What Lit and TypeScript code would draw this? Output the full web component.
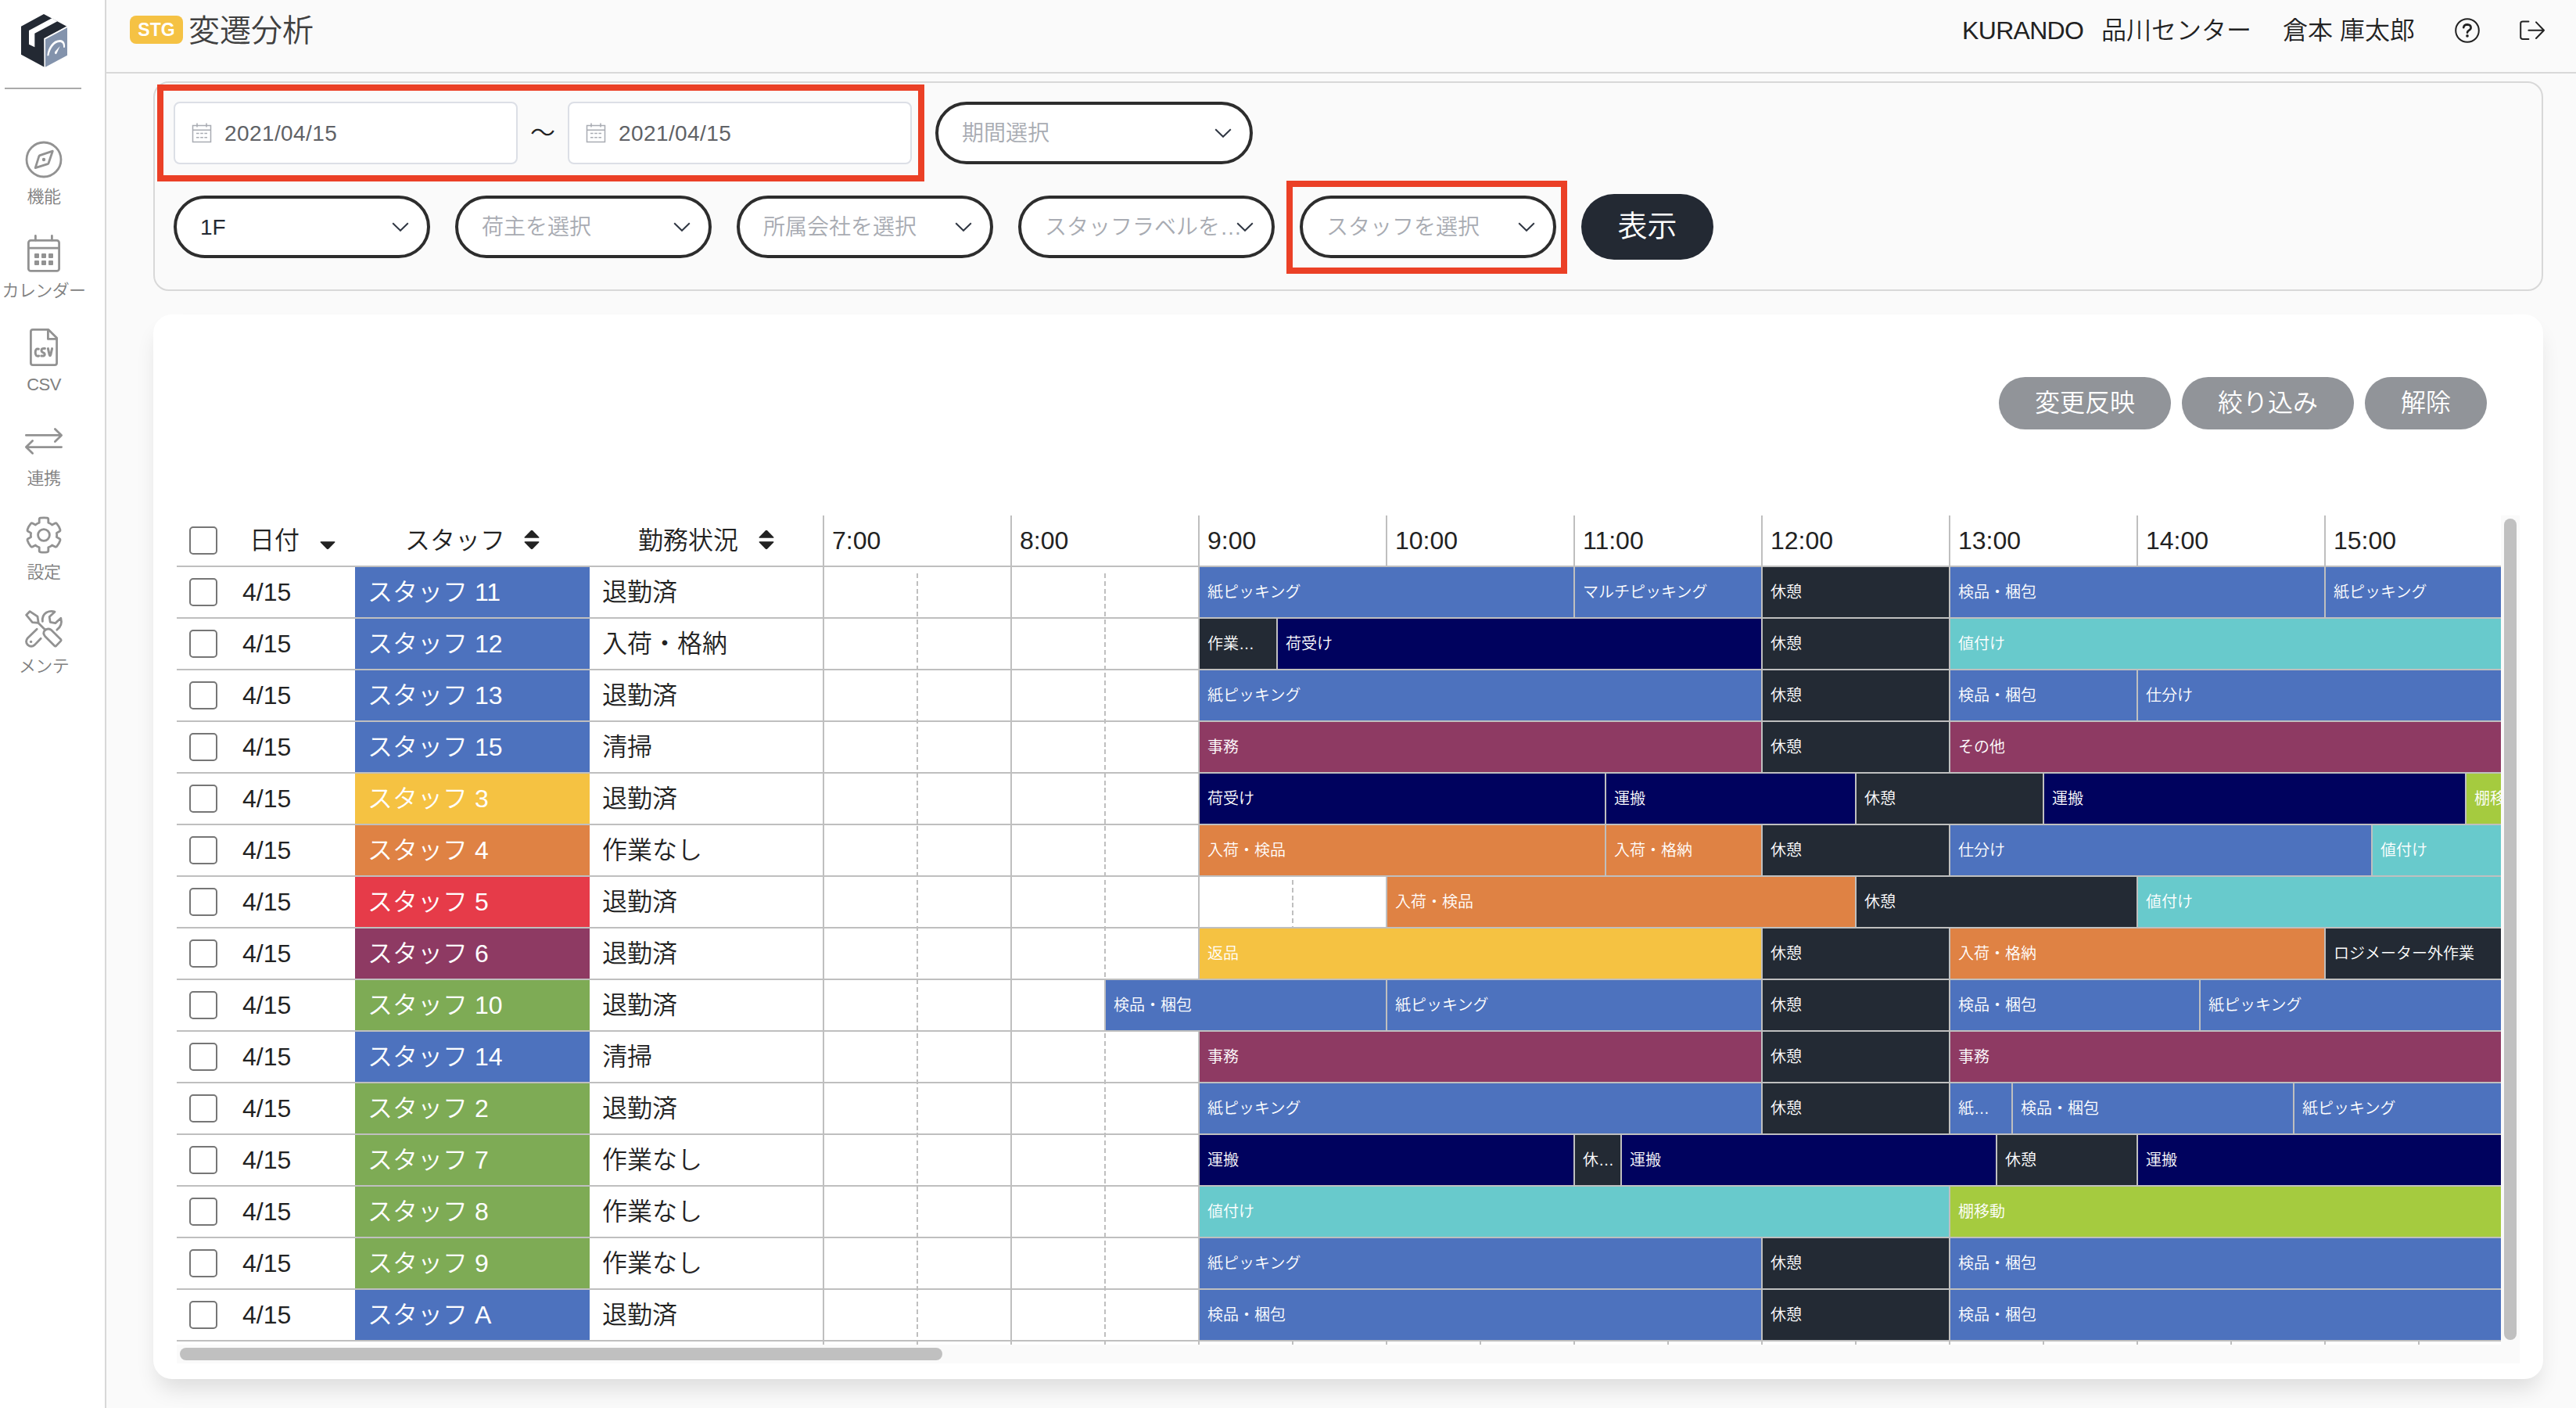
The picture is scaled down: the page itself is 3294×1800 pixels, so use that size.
import { LitElement, html, css, svg } from "lit";
import { customElement } from "lit/decorators.js";
import { classMap } from "lit/directives/class-map.js";
import { styleMap } from "lit/directives/style-map.js";

type Tone = "blue" | "navy" | "dark" | "teal" | "purple" | "orange" | "yellow" | "red" | "green" | "lime";
type Task = [label: string, start: string, end: string, tone: Tone];
interface Row {
  staff: string;
  tone: Tone;
  status: string;
  tasks: Task[];
}

const HOURS = ["7:00", "8:00", "9:00", "10:00", "11:00", "12:00", "13:00", "14:00", "15:00"];
const PX_PER_MINUTE = 4;
const END = "15:57";
const rest = (start = "12:00", end = "13:00"): Task => ["休憩", start, end, "dark"];

const ROWS: Row[] = [
  { staff: "スタッフ 11", tone: "blue", status: "退勤済", tasks: [["紙ピッキング", "9:00", "11:00", "blue"], ["マルチピッキング", "11:00", "12:00", "blue"], rest(), ["検品・梱包", "13:00", "15:00", "blue"], ["紙ピッキング", "15:00", END, "blue"]] },
  { staff: "スタッフ 12", tone: "blue", status: "入荷・格納", tasks: [["作業…", "9:00", "9:25", "dark"], ["荷受け", "9:25", "12:00", "navy"], rest(), ["値付け", "13:00", END, "teal"]] },
  { staff: "スタッフ 13", tone: "blue", status: "退勤済", tasks: [["紙ピッキング", "9:00", "12:00", "blue"], rest(), ["検品・梱包", "13:00", "14:00", "blue"], ["仕分け", "14:00", END, "blue"]] },
  { staff: "スタッフ 15", tone: "blue", status: "清掃", tasks: [["事務", "9:00", "12:00", "purple"], rest(), ["その他", "13:00", END, "purple"]] },
  { staff: "スタッフ 3", tone: "yellow", status: "退勤済", tasks: [["荷受け", "9:00", "11:10", "navy"], ["運搬", "11:10", "12:30", "navy"], rest("12:30", "13:30"), ["運搬", "13:30", "15:45", "navy"], ["棚移動", "15:45", END, "lime"]] },
  { staff: "スタッフ 4", tone: "orange", status: "作業なし", tasks: [["入荷・検品", "9:00", "11:10", "orange"], ["入荷・格納", "11:10", "12:00", "orange"], rest(), ["仕分け", "13:00", "15:15", "blue"], ["値付け", "15:15", END, "teal"]] },
  { staff: "スタッフ 5", tone: "red", status: "退勤済", tasks: [["入荷・検品", "10:00", "12:30", "orange"], rest("12:30", "14:00"), ["値付け", "14:00", END, "teal"]] },
  { staff: "スタッフ 6", tone: "purple", status: "退勤済", tasks: [["返品", "9:00", "12:00", "yellow"], rest(), ["入荷・格納", "13:00", "15:00", "orange"], ["ロジメーター外作業", "15:00", END, "dark"]] },
  { staff: "スタッフ 10", tone: "green", status: "退勤済", tasks: [["検品・梱包", "8:30", "10:00", "blue"], ["紙ピッキング", "10:00", "12:00", "blue"], rest(), ["検品・梱包", "13:00", "14:20", "blue"], ["紙ピッキング", "14:20", END, "blue"]] },
  { staff: "スタッフ 14", tone: "blue", status: "清掃", tasks: [["事務", "9:00", "12:00", "purple"], rest(), ["事務", "13:00", END, "purple"]] },
  { staff: "スタッフ 2", tone: "green", status: "退勤済", tasks: [["紙ピッキング", "9:00", "12:00", "blue"], rest(), ["紙…", "13:00", "13:20", "blue"], ["検品・梱包", "13:20", "14:50", "blue"], ["紙ピッキング", "14:50", END, "blue"]] },
  { staff: "スタッフ 7", tone: "green", status: "作業なし", tasks: [["運搬", "9:00", "11:00", "navy"], ["休…", "11:00", "11:15", "dark"], ["運搬", "11:15", "13:15", "navy"], rest("13:15", "14:00"), ["運搬", "14:00", END, "navy"]] },
  { staff: "スタッフ 8", tone: "green", status: "作業なし", tasks: [["値付け", "9:00", "13:00", "teal"], ["棚移動", "13:00", END, "lime"]] },
  { staff: "スタッフ 9", tone: "green", status: "作業なし", tasks: [["紙ピッキング", "9:00", "12:00", "blue"], rest(), ["検品・梱包", "13:00", END, "blue"]] },
  { staff: "スタッフ A", tone: "blue", status: "退勤済", tasks: [["検品・梱包", "9:00", "12:00", "blue"], rest(), ["検品・梱包", "13:00", END, "blue"]] },
];

/** Distance in pixels of a clock time from the left edge of the timeline. */
const offset = (time: string): number => {
  const [h, m] = time.split(":").map(Number);
  return ((h - 7) * 60 + m) * PX_PER_MINUTE;
};

const ICONS = {
  compass: svg`<circle cx="24" cy="24" r="22"/><path d="M35.3 13.2 L19 18.6 Q18.2 18.9 17.9 19.7 L13.2 34.6 L29 29.6 Q29.8 29.3 30.1 28.5 Z"/><circle cx="24" cy="24" r="2.2" fill="#929292" stroke="none"/>`,
  calendar: svg`<rect x="4.4" y="7.4" width="39.2" height="39" rx="3"/><path d="M4.4 17.2H43.6M13.4 1.4V7M34.4 1.4V7"/><g fill="#929292" stroke="none"><rect x="12" y="24" width="6" height="6" rx="1"/><rect x="21" y="24" width="6" height="6" rx="1"/><rect x="30" y="24" width="6" height="6" rx="1"/><rect x="12" y="33" width="6" height="6" rx="1"/><rect x="21" y="33" width="6" height="6" rx="1"/><rect x="30" y="33" width="6" height="6" rx="1"/></g>`,
  csv: svg`<path d="M30 1.4H10Q7.4 1.4 7.4 4V44Q7.4 46.6 10 46.6H38Q40.6 46.6 40.6 44V12Z"/><path d="M29.4 2V13.4H40.4"/><path stroke-width="3" d="M17.4 26.2Q13.2 25 13.2 30.6Q13.2 36.2 17.6 35M25.4 25.6Q21 25 21 28Q21 29.8 23 30.6Q25.2 31.4 25.2 33.2Q25.2 35.6 20.8 35M29.4 25.6L31.2 33.6Q32 36 32.8 33.6L34.6 25.6"/>`,
  exchange: svg`<path d="M1.4 16.4H46.4M38.4 8.4L46.6 16.4L38.4 24.4M46.6 31.6H1.6M9.6 23.6L1.4 31.6L9.6 39.6"/>`,
  gear: svg`<circle cx="24" cy="24" r="7.4"/><path d="M18.2 4Q18.2 2.4 19.8 2.2Q24 1.6 28.2 2.2Q29.8 2.4 29.8 4V8.2Q32.6 9.2 34.6 11L38.4 9Q39.6 8.4 40.6 9.4Q43.8 13.2 45 17.4Q45.2 18.6 44.2 19.2L40.4 21.4Q41 24 40.4 26.6L44.2 28.8Q45.2 29.4 45 30.6Q43.8 34.8 40.6 38.6Q39.6 39.6 38.4 39L34.6 37Q32.6 38.8 29.8 39.8V44Q29.8 45.6 28.2 45.8Q24 46.4 19.8 45.8Q18.2 45.6 18.2 44V39.8Q15.4 38.8 13.4 37L9.6 39Q8.4 39.6 7.4 38.6Q4.2 34.8 3 30.6Q2.8 29.4 3.8 28.8L7.6 26.6Q7 24 7.6 21.4L3.8 19.2Q2.8 18.6 3 17.4Q4.2 13.2 7.4 9.4Q8.4 8.4 9.6 9L13.4 11Q15.4 9.2 18.2 8.2Z"/>`,
  tools: svg`<path d="M1.6 6.2L6.2 1.6L16 8.2L17.2 16.4L9.4 15.6ZM16.6 16L25.6 25M25 26.2Q28.6 22.4 33.4 25.2L45.8 37.4Q46.6 38.4 45.8 39.4L39.8 45.6Q38.6 46.6 37.6 45.6L25.6 33.4Q22.4 29.4 25 26.2ZM15.2 24.2L3.6 35.4Q-.4 40.2 3.4 44.4Q8 48.2 12.4 44.4L20.2 36.2M22.4 14.4Q21.4 6.8 27.4 3Q32.6 .4 38 2.2L31.2 8.6L32.2 15.4L38.8 16.6L45.8 10.2Q48.4 19.6 40.8 25.2"/><circle cx="7.6" cy="40.4" r="1.7" fill="#929292" stroke="none"/>`,
};

const NAV: [keyof typeof ICONS, string][] = [
  ["compass", "機能"],
  ["calendar", "カレンダー"],
  ["csv", "CSV"],
  ["exchange", "連携"],
  ["gear", "設定"],
  ["tools", "メンテ"],
];

const logo = html`
  <svg class="logo" viewBox="81 54 177 204">
    <path fill="#232933" d="M168 54L256 101L170 148V257L81 209V101Z" />
    <path fill="#fff" d="M199 70L220 82L133 128V181L111 170V117Z" />
    <path fill="#fff" d="M169 147L258 100V107L174 152V258H170Z" />
    <path fill="#8393ac" d="M174 151L258 106V212L174 257Z" />
    <path fill="#fff" d="M181 214C184 180 204 153 230 153C245 153 251 166 249 182L243 182C244 169 239 162 229 162C210 162 192 184 187 214Z" />
    <path fill="#fff" d="M230 177L219 202Q216 210 212 207Q208 204 211 198Z" />
  </svg>
`;

const chevron = html`<svg class="chevron" viewBox="0 0 22 12"><path d="M1.2 1.2L11 10.8L20.8 1.2" /></svg>`;

const dateIcon = html`
  <svg class="date-icon" viewBox="0 0 26 26">
    <path d="M1.5 3.5H24.5V24.5H1.5ZM1.5 9.2H24.5M7 .6V5.5M19 .6V5.5" />
    <path stroke-dasharray="3.6 1.6" d="M6 13.5H20M6 18.8H20" />
  </svg>
`;

const sortBoth = html`
  <svg class="sort" viewBox="0 0 20 26">
    <path d="M1.2 10.8Q0 10.6 .8 9.4L8.6 1.4Q10 .2 11.4 1.4L19.2 9.4Q20 10.6 18.8 10.8Z" />
    <path d="M1.2 15.2Q0 15.4 .8 16.6L8.6 24.6Q10 25.8 11.4 24.6L19.2 16.6Q20 15.4 18.8 15.2Z" />
  </svg>
`;
const sortDown = html`
  <svg class="sort" viewBox="0 0 20 26">
    <path d="M1.2 15.2Q0 15.4 .8 16.6L8.6 24.6Q10 25.8 11.4 24.6L19.2 16.6Q20 15.4 18.8 15.2Z" />
  </svg>
`;

@customElement("app-root")
export class AppRoot extends LitElement {
  static styles = css`
    :host {
      display: flex;
      width: 3294px;
      height: 1800px;
      overflow: hidden;
      background: #fafafa;
      color: #222;
      font-family: "Liberation Sans", "Noto Sans CJK JP", sans-serif;
      font-weight: 350;
      font-size: 32px;
      line-height: 1.25;
    }
    * { box-sizing: border-box; }
    svg { display: block; fill: none; flex: none; }

    .sidebar {
      flex: none;
      width: 136px;
      padding: 18px 22px 0 0;
      border-right: 2px solid #d8d8d8;
      background: #fff;
      display: flex;
      flex-direction: column;
      align-items: center;
    }
    .logo { width: 59px; height: 68px; }
    .divider { width: 98px; height: 2px; margin: 26px 2px 66px 0; background: #aaa; }
    .nav-item {
      height: 120px;
      display: flex;
      flex-direction: column;
      align-items: center;
      gap: 10px;
      color: #808080;
      font-size: 22px;
      line-height: 28px;
      white-space: nowrap;
      letter-spacing: -0.6px;
    }
    .nav-icon {
      width: 48px;
      height: 48px;
      overflow: visible;
      stroke: #929292;
      stroke-width: 2.8;
      stroke-linecap: round;
      stroke-linejoin: round;
    }

    .main { flex: 1; min-width: 0; display: flex; flex-direction: column; }
    .header {
      flex: none;
      height: 94px;
      padding: 0 40px 14px 30px;
      border-bottom: 2px solid #d8d8d8;
      display: flex;
      align-items: center;
      white-space: pre;
    }
    .badge {
      width: 68px;
      height: 36px;
      margin: -2px 7px 0 0;
      border-radius: 8px;
      background: #f5c244;
      color: #fff;
      font-weight: 700;
      font-size: 23px;
      line-height: 37px;
      text-align: center;
    }
    .title { flex: 1; font-size: 40px; color: #404040; }
    .company { width: 160px; margin-right: 18px; letter-spacing: -0.7px; }
    .center { margin-right: 40px; }
    .user { margin-right: 51px; }
    .help, .logout { width: 32px; height: 32px; stroke: #222; stroke-width: 2; stroke-linecap: round; stroke-linejoin: round; }
    .help { margin-right: 51px; }
    .help-mark { fill: #222; stroke: none; }

    .filters {
      position: relative;
      flex: none;
      height: 268px;
      margin: 10px 42px 30px 60px;
      padding: 24px;
      border: 2px solid #d8d8d8;
      border-radius: 20px;
      display: flex;
      flex-direction: column;
      gap: 40px;
    }
    .filter-row { height: 80px; display: flex; align-items: center; }
    .date {
      width: 440px;
      height: 80px;
      padding-left: 21px;
      border: 2px solid #dcdfe6;
      border-radius: 8px;
      background: #fff;
      color: #606266;
      font-size: 28px;
      letter-spacing: 0.4px;
      display: flex;
      align-items: center;
      gap: 16px;
    }
    .date-icon { width: 26px; height: 26px; stroke: #a8abb2; stroke-width: 1.5; }
    .tilde { width: 64px; text-align: center; font-size: 32px; }
    .select {
      width: 328px;
      height: 80px;
      margin-right: 32px;
      padding: 0 23px 0 30px;
      border: 4px solid #2d2d2d;
      border-radius: 40px;
      background: #fff;
      font-size: 28px;
      color: #a8abb2;
      display: flex;
      align-items: center;
      justify-content: space-between;
    }
    .select.period { width: 406px; margin-left: 30px; }
    .select.filled { color: #232933; }
    .select-text { width: 256px; flex: none; overflow: hidden; text-overflow: ellipsis; white-space: nowrap; }
    .chevron { width: 22px; height: 12px; margin-left: -20px; stroke: #303743; stroke-width: 2; }
    .show {
      width: 169px;
      height: 84px;
      border-radius: 42px;
      background: #232933;
      color: #fff;
      font-size: 38px;
      line-height: 82px;
      text-align: center;
    }
    .mark { position: absolute; border: 8px solid #eb4026; }
    .mark.dates { left: 3px; top: 2px; width: 981px; height: 124px; }
    .mark.staff { left: 1447px; top: 125px; width: 359px; height: 119px; }

    .card {
      flex: none;
      height: 1361px;
      margin: 0 42px 0 60px;
      padding: 80px 30px 20px;
      border-radius: 24px;
      background: #fff;
      box-shadow: 0 18px 28px -6px rgba(0, 0, 0, 0.12);
    }
    .actions { display: flex; justify-content: flex-end; gap: 14px; margin: 0 42px 110px 0; }
    .action {
      height: 67px;
      padding: 0 46px;
      border-radius: 34px;
      background: #919499;
      color: #fff;
      line-height: 66px;
    }

    .scroller {
      display: grid;
      grid-template-columns: 2972px 24px;
      grid-template-rows: 1060px 24px;
      background: #fafafa;
    }
    .table { position: relative; overflow: hidden; background: #fff; }
    .v-track { padding: 4px; }
    .v-thumb { height: 1050px; border-radius: 8px; background: #c0c0c0; }
    .h-track { padding: 4px; }
    .h-thumb { width: 975px; height: 16px; border-radius: 8px; background: #c0c0c0; }

    .lines { position: absolute; top: 0; left: 826px; height: 1060px; display: flex; }
    .hour { width: 240px; flex: none; border-left: 2px solid #bfbfbf; padding: 74px 0 0 118px; }
    .half {
      width: 2px;
      height: 986px;
      background: repeating-linear-gradient(to bottom, #bfbfbf 0 6px, transparent 6px 9.8px);
    }

    .row {
      position: relative;
      height: 66px;
      width: 2972px;
      border-bottom: 2px solid #bfbfbf;
      display: flex;
      align-items: stretch;
      line-height: 64px;
      white-space: pre;
    }
    .check { width: 84px; flex: none; padding-left: 16px; display: flex; align-items: center; }
    .box { width: 36px; height: 36px; border: 2px solid #767676; border-radius: 5px; background: #fff; }
    .date-cell { width: 144px; flex: none; }
    .staff-cell { width: 300px; flex: none; padding-left: 16px; color: #fff; }
    .status-cell { width: 298px; flex: none; padding-left: 16px; }
    .timeline { flex: 1; min-width: 0; display: flex; overflow: hidden; }
    .task {
      flex: none;
      overflow: hidden;
      padding-left: 10px;
      border-left: 2px solid #bfbfbf;
      color: #fff;
      font-size: 20px;
    }

    .head .date-cell, .head .staff-cell, .head .status-cell { display: flex; align-items: center; color: #222; }
    .head .date-cell { padding-left: 9px; gap: 26px; }
    .head .staff-cell { padding-left: 64px; gap: 24px; }
    .head .status-cell { padding-left: 62px; gap: 26px; }
    .time { width: 240px; flex: none; padding-left: 12px; }
    .sort { width: 20px; height: 26px; margin-top: -2px; fill: #222; }

    .blue { background: #4d72be; }
    .navy { background: #00025e; }
    .dark { background: #232a34; }
    .teal { background: #68cacc; }
    .purple { background: #8e3a63; }
    .orange { background: #df8244; }
    .yellow { background: #f5c242; }
    .red { background: #e63b49; }
    .green { background: #7eab55; }
    .lime { background: #a5cb3f; }
  `;

  private select(text: string, kind: Record<string, boolean> = {}) {
    return html`<div class=${classMap({ select: true, ...kind })}><span class="select-text">${text}</span>${chevron}</div>`;
  }

  private task([label, start, end, tone]: Task, previousEnd: string) {
    const left = offset(start) - offset(previousEnd);
    const width = end === END ? 2146 - offset(start) : offset(end) - offset(start);
    return html`<div class="task ${tone}" style=${styleMap({ marginLeft: `${left}px`, width: `${width}px` })}>${label}</div>`;
  }

  private row(row: Row) {
    return html`
      <div class="row">
        <div class="check"><div class="box"></div></div>
        <div class="date-cell">4/15</div>
        <div class="staff-cell ${row.tone}">${row.staff}</div>
        <div class="status-cell">${row.status}</div>
        <div class="timeline">${row.tasks.map((t, i) => this.task(t, i ? row.tasks[i - 1][2] : "7:00"))}</div>
      </div>
    `;
  }

  render() {
    return html`
      <nav class="sidebar">
        ${logo}
        <div class="divider"></div>
        ${NAV.map(([icon, label]) => html`<div class="nav-item"><svg class="nav-icon" viewBox="0 0 48 48">${ICONS[icon]}</svg><span>${label}</span></div>`)}
      </nav>
      <div class="main">
        <header class="header"
          ><span class="badge">STG</span><span class="title">変遷分析</span
          ><span class="company">KURANDO</span><span class="center">品川センター</span><span class="user">倉本 庫太郎</span
          ><svg class="help" viewBox="0 0 32 32"><circle cx="16" cy="16" r="14.8" /><path stroke-width="2.6" d="M11.2 12.2Q11.8 8.4 16 8.4Q20.6 8.8 20.6 12.2Q20.6 14.4 18 15.8Q16 17 16 18.8" /><circle class="help-mark" cx="16" cy="22.9" r="1.8" /></svg
          ><svg class="logout" viewBox="0 0 32 32"><path d="M11.4 4.4H4Q1.2 4.4 1.2 6.8V24.6Q1.2 27 4 27H11.4M11.4 15.7H31M21 5.4L31 15.7L21 26" /></svg
        ></header>
        <section class="filters">
          <div class="filter-row">
            <div class="date">${dateIcon}<span>2021/04/15</span></div>
            <div class="tilde">〜</div>
            <div class="date">${dateIcon}<span>2021/04/15</span></div>
            ${this.select("期間選択", { period: true })}
          </div>
          <div class="filter-row">
            ${this.select("1F", { filled: true })}
            ${this.select("荷主を選択")}
            ${this.select("所属会社を選択")}
            ${this.select("スタッフラベルを選択")}
            ${this.select("スタッフを選択")}
            <div class="show">表示</div>
          </div>
          <div class="mark dates"></div>
          <div class="mark staff"></div>
        </section>
        <section class="card">
          <div class="actions">
            <div class="action">変更反映</div>
            <div class="action">絞り込み</div>
            <div class="action">解除</div>
          </div>
          <div class="scroller">
            <div class="table">
              <div class="lines">${HOURS.map(() => html`<div class="hour"><div class="half"></div></div>`)}</div>
              <div class="row head">
                <div class="check"><div class="box"></div></div>
                <div class="date-cell"><span>日付</span>${sortDown}</div>
                <div class="staff-cell"><span>スタッフ</span>${sortBoth}</div>
                <div class="status-cell"><span>勤務状況</span>${sortBoth}</div>
                <div class="timeline">${HOURS.map((h) => html`<div class="time">${h}</div>`)}</div>
              </div>
              ${ROWS.map((r) => this.row(r))}
            </div>
            <div class="v-track"><div class="v-thumb"></div></div>
            <div class="h-track"><div class="h-thumb"></div></div>
          </div>
        </section>
      </div>
    `;
  }
}
